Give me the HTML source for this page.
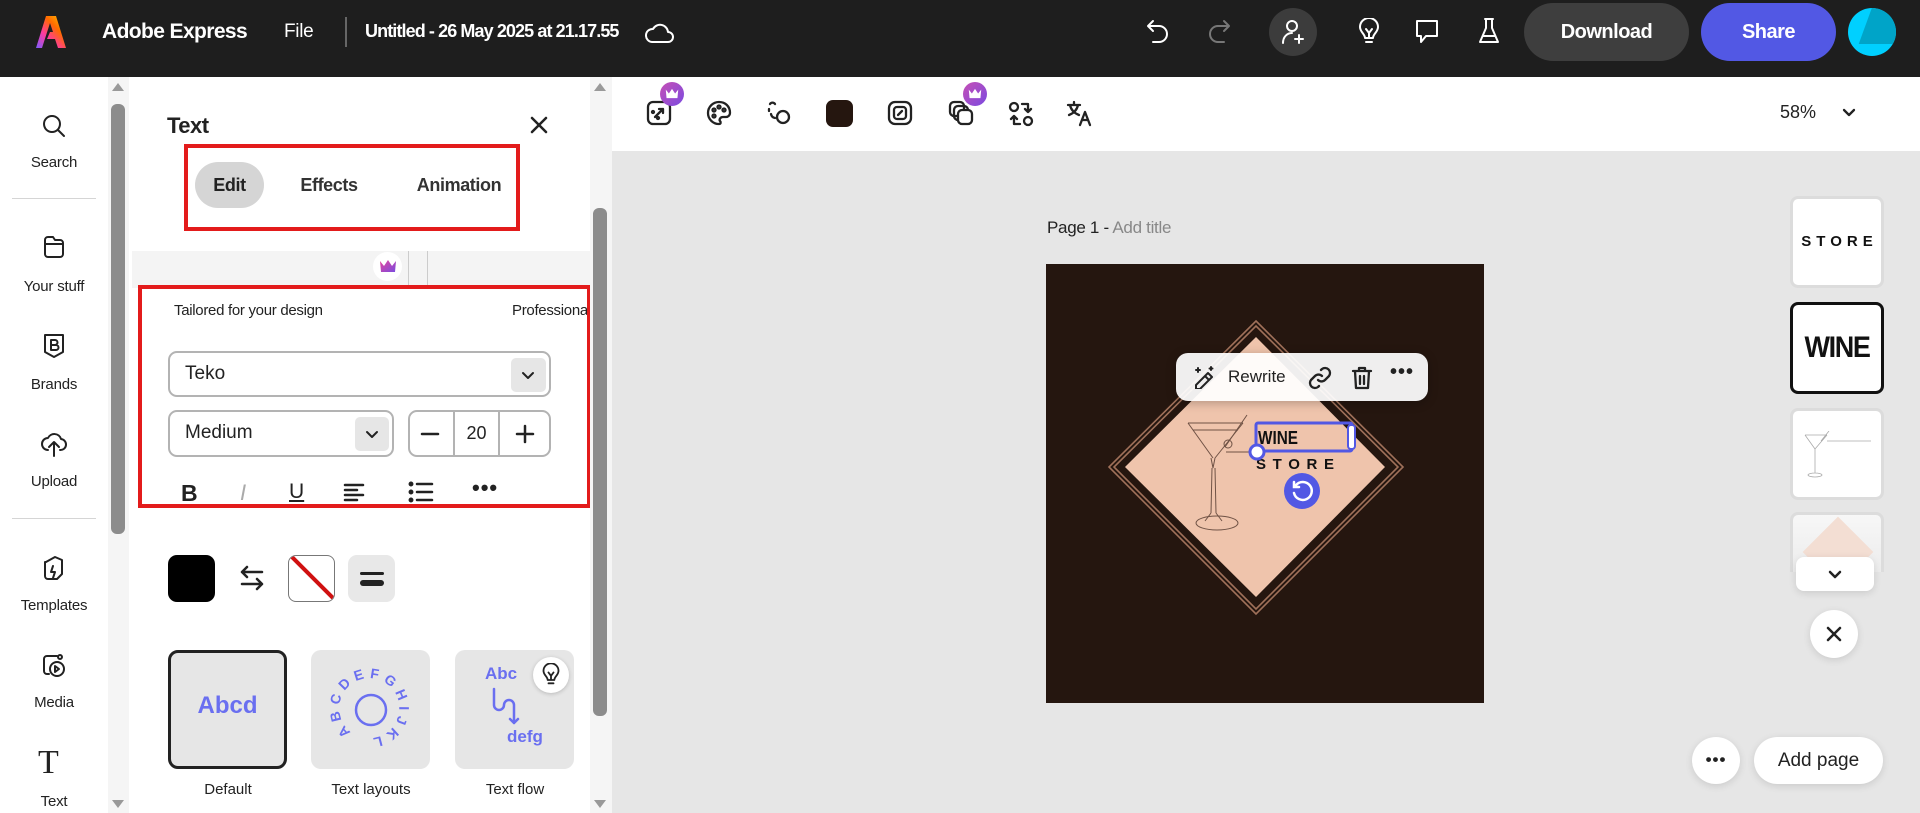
<!DOCTYPE html>
<html><head><meta charset="utf-8"><style>
*{box-sizing:border-box;margin:0;padding:0}
body{width:1920px;height:813px;overflow:hidden;font-family:"Liberation Sans",sans-serif;background:#e6e6e6;position:relative;color:#222}
.a{position:absolute}
.top{left:0;top:0;width:1920px;height:77px;background:#1e1e1e;color:#fff}
.ico{position:absolute;fill:none;stroke:currentColor;stroke-width:2;stroke-linecap:round;stroke-linejoin:round}
.rail{left:0;top:77px;width:108px;height:736px;background:#fff}
.rl{position:absolute;width:108px;text-align:center;font-size:15px;color:#222;letter-spacing:-.2px}
.hr{position:absolute;height:1px;background:#d5d5d5}
.sb{background:#f5f5f5}
.thumb{background:#8c8c8c;border-radius:6px;position:absolute}
.panel{left:129px;top:77px;width:461px;height:736px;background:#fff}
.red{position:absolute;border:4px solid #e31b1b}
.dd{position:absolute;border:2px solid #b3b3b3;border-radius:9px;background:#fff}
.chev{position:absolute;background:#e6e6e6;border-radius:5px}
.card{position:absolute;width:119px;height:119px;background:#e6e6e6;border-radius:10px}
.cl{position:absolute;font-size:15px;text-align:center;width:140px}
.tb{left:612px;top:77px;width:1308px;height:74px;background:#fff}
.crown{position:absolute;width:24px;height:24px;border-radius:50%;background:linear-gradient(135deg,#c64fb5,#7b4ae0)}
.tn{position:absolute;left:1790px;width:94px;height:92px;background:#fff;border-radius:8px;border:3px solid #dcdcdc;overflow:hidden}
</style></head><body>

<!-- TOP BAR -->
<div class="a top">
  <svg class="a" style="left:36px;top:14px" width="30" height="36" viewBox="0 0 30 36">
    <defs><linearGradient id="lg" x1="0" y1="1" x2="1" y2="0"><stop offset="0" stop-color="#7b5cff"/><stop offset=".35" stop-color="#ff3aa0"/><stop offset=".65" stop-color="#ff6a00"/><stop offset="1" stop-color="#ffcc00"/></linearGradient></defs>
    <path d="M10 2h10l10 32h-8l-3-9h-8l3-7h3l-3-9-8 25H0z" fill="url(#lg)"/>
  </svg>
  <div class="a" style="left:102px;top:20px;font-size:21px;font-weight:bold;letter-spacing:-.6px">Adobe Express</div>
  <div class="a" style="left:284px;top:21px;font-size:19px;letter-spacing:-.3px">File</div>
  <div class="a" style="left:345px;top:17px;width:2px;height:30px;background:#666"></div>
  <div class="a" style="left:365px;top:21px;font-size:18px;font-weight:bold;letter-spacing:-.9px">Untitled - 26 May 2025 at 21.17.55</div>
  <svg class="ico" style="left:645px;top:19px;color:#fff" width="30" height="26" viewBox="0 0 30 26"><path d="M7 23h16a5 5 0 0 0 0-10 8 8 0 0 0-15-3 6 6 0 0 0-1 13z"/></svg>
  <svg class="ico" style="left:1145px;top:18px;color:#fff" width="26" height="28" viewBox="0 0 26 28"><path d="M8 3L3 8l5 5M3 8h11a8 8 0 0 1 0 16H8"/></svg>
  <svg class="ico" style="left:1206px;top:18px;color:#777" width="26" height="28" viewBox="0 0 26 28"><path d="M18 3l5 5-5 5M23 8H12a8 8 0 0 0 0 16h6"/></svg>
  <div class="a" style="left:1269px;top:8px;width:48px;height:48px;border-radius:50%;background:#3c3c3c"></div>
  <svg class="ico" style="left:1281px;top:19px;color:#fff" width="26" height="26" viewBox="0 0 26 26"><circle cx="11" cy="7" r="5"/><path d="M2 24c0-6 4-10 9-10M18 16v8M14 20h8"/></svg>
  <svg class="ico" style="left:1357px;top:18px;color:#fff" width="24" height="28" viewBox="0 0 24 28"><path d="M8 20c0-4-5-6-5-11a9 9 0 0 1 18 0c0 5-5 7-5 11zM9 24h6M9 11l3 4 3-4M12 15v5"/></svg>
  <svg class="ico" style="left:1414px;top:18px;color:#fff" width="26" height="28" viewBox="0 0 26 28"><path d="M3 3h20v15H12l-5 6v-6H3z"/></svg>
  <svg class="ico" style="left:1477px;top:17px;color:#fff" width="24" height="30" viewBox="0 0 24 30"><path d="M8 2h8M9 2v9L3 25h18L15 11V2M6 19h12"/></svg>
  <div class="a" style="left:1524px;top:3px;width:165px;height:58px;border-radius:29px;background:#3e3e3e;font-size:20px;font-weight:bold;text-align:center;line-height:58px;letter-spacing:-.5px">Download</div>
  <div class="a" style="left:1701px;top:3px;width:135px;height:58px;border-radius:29px;background:#5258e4;font-size:20px;font-weight:bold;text-align:center;line-height:58px;letter-spacing:-.5px">Share</div>
  <div class="a" style="left:1848px;top:8px;width:48px;height:48px;border-radius:50%;background:#00d0ff;overflow:hidden"><div class="a" style="left:18px;top:-4px;width:40px;height:40px;background:#00a4c8;transform:skewX(-20deg)"></div></div>
</div>

<!-- LEFT RAIL -->
<div class="a rail">
  <svg class="ico" style="left:41px;top:36px" width="26" height="26" viewBox="0 0 26 26"><circle cx="11" cy="11" r="8"/><path d="M17 17l6 6"/></svg>
  <div class="rl" style="top:77px">Search</div>
  <div class="hr" style="left:12px;top:121px;width:84px"></div>
  <svg class="ico" style="left:42px;top:157px" width="24" height="26" viewBox="0 0 24 26"><path d="M3 6a3 3 0 0 1 3-3h5l2 3h5a3 3 0 0 1 3 3v11a3 3 0 0 1-3 3H6a3 3 0 0 1-3-3zM3 10h18"/></svg>
  <div class="rl" style="top:201px">Your stuff</div>
  <svg class="ico" style="left:42px;top:255px" width="24" height="28" viewBox="0 0 24 28"><path d="M3 3h18v17l-9 5-9-5z"/><path d="M9 8h4a2.5 2.5 0 0 1 0 5H9zM9 13h5a2.5 2.5 0 0 1 0 5H9z"/></svg>
  <div class="rl" style="top:299px">Brands</div>
  <svg class="ico" style="left:40px;top:353px" width="28" height="28" viewBox="0 0 28 28"><path d="M8 20a6 6 0 0 1 0-12 7 7 0 0 1 13 1 5 5 0 0 1-1 11M14 26V13M9 17l5-5 5 5"/></svg>
  <div class="rl" style="top:396px">Upload</div>
  <div class="hr" style="left:12px;top:441px;width:84px"></div>
  <svg class="ico" style="left:41px;top:477px" width="26" height="28" viewBox="0 0 26 28"><path d="M5 8l9-5 7 3v14l-5 5H7a3 3 0 0 1-3-3V8zM12 12l-2 6h4l-2 6"/></svg>
  <div class="rl" style="top:520px">Templates</div>
  <svg class="ico" style="left:41px;top:575px" width="26" height="28" viewBox="0 0 26 28"><path d="M8 22H6a3 3 0 0 1-3-3V7a3 3 0 0 1 3-3h10"/><circle cx="16" cy="17" r="7"/><path d="M14 14l4 3-4 3z"/><circle cx="19" cy="5" r="2"/></svg>
  <div class="rl" style="top:617px">Media</div>
  <div class="a" style="left:38px;top:667px;font-family:'Liberation Serif',serif;font-size:34px;color:#222">T</div>
  <div class="rl" style="top:716px">Text</div>
</div>
<div class="a sb" style="left:108px;top:77px;width:21px;height:736px"></div>
<div class="thumb" style="left:111px;top:104px;width:14px;height:430px"></div>
<div class="a" style="left:112px;top:83px;width:0;height:0;border-left:6px solid transparent;border-right:6px solid transparent;border-bottom:8px solid #999"></div>
<div class="a" style="left:112px;top:800px;width:0;height:0;border-left:6px solid transparent;border-right:6px solid transparent;border-top:8px solid #999"></div>

<!-- PANEL -->
<div class="a panel">
  <div class="a" style="left:38px;top:36px;font-size:22px;font-weight:bold;letter-spacing:-.5px">Text</div>
  <svg class="ico" style="left:400px;top:38px;stroke-width:2.5" width="20" height="20" viewBox="0 0 20 20"><path d="M3 3l14 14M17 3L3 17"/></svg>
  <div class="red" style="left:55px;top:67px;width:336px;height:87px"></div>
  <div class="a" style="left:66px;top:85px;width:69px;height:46px;border-radius:23px;background:#d5d5d5"></div>
  <div class="a" style="left:66px;top:98px;width:69px;text-align:center;font-size:18px;font-weight:bold;letter-spacing:-.4px">Edit</div>
  <div class="a" style="left:160px;top:98px;width:80px;text-align:center;font-size:18px;font-weight:bold;color:#333;letter-spacing:-.4px">Effects</div>
  <div class="a" style="left:280px;top:98px;width:100px;text-align:center;font-size:18px;font-weight:bold;color:#333;letter-spacing:-.4px">Animation</div>
  <div class="a" style="left:3px;top:174px;width:458px;height:37px;background:#f4f4f4"></div>
  <div class="a" style="left:279px;top:174px;width:1px;height:37px;background:#ccc"></div>
  <div class="a" style="left:298px;top:174px;width:1px;height:37px;background:#ccc"></div>
  <div class="a" style="left:244px;top:175px;width:29px;height:29px;border-radius:50%;background:#fff"></div>
  <svg class="a" style="left:250px;top:182px" width="18" height="14" viewBox="0 0 18 14"><defs><linearGradient id="cg" x1="0" y1="0" x2="1" y2="1"><stop offset="0" stop-color="#e8439a"/><stop offset="1" stop-color="#7a4ce0"/></linearGradient></defs><path d="M1 2l4 5 4-6 4 6 4-5-1 11H2z" fill="url(#cg)"/></svg>
  <div class="red" style="left:9px;top:208px;width:453px;height:223px"></div>
  <div class="a" style="left:45px;top:225px;font-size:15px;color:#222;letter-spacing:-.3px">Tailored for your design</div>
  <div class="a" style="left:383px;top:225px;font-size:15px;color:#222;letter-spacing:-.3px;width:75px;overflow:hidden;white-space:nowrap">Professional</div>
  <div class="dd" style="left:39px;top:274px;width:383px;height:46px"></div>
  <div class="a" style="left:56px;top:286px;font-size:19px">Teko</div>
  <div class="chev" style="left:382px;top:281px;width:35px;height:34px"></div>
  <svg class="ico" style="left:390px;top:289px" width="18" height="18" viewBox="0 0 18 18"><path d="M4 7l5 5 5-5"/></svg>
  <div class="dd" style="left:39px;top:333px;width:226px;height:47px"></div>
  <div class="a" style="left:56px;top:345px;font-size:19px">Medium</div>
  <div class="chev" style="left:226px;top:340px;width:34px;height:34px"></div>
  <svg class="ico" style="left:234px;top:348px" width="18" height="18" viewBox="0 0 18 18"><path d="M4 7l5 5 5-5"/></svg>
  <div class="dd" style="left:279px;top:333px;width:143px;height:47px"></div>
  <div class="a" style="left:324px;top:335px;width:2px;height:43px;background:#b3b3b3"></div>
  <div class="a" style="left:369px;top:335px;width:2px;height:43px;background:#b3b3b3"></div>
  <svg class="ico" style="left:291px;top:347px;stroke-width:2.5" width="20" height="20" viewBox="0 0 20 20"><path d="M2 10h16"/></svg>
  <div class="a" style="left:326px;top:346px;width:43px;text-align:center;font-size:18px">20</div>
  <svg class="ico" style="left:386px;top:347px;stroke-width:2.5" width="20" height="20" viewBox="0 0 20 20"><path d="M2 10h16M10 2v16"/></svg>
  <div class="a" style="left:52px;top:403px;font-size:23px;font-weight:bold">B</div>
  <div class="a" style="left:111px;top:403px;font-size:22px;font-style:italic;color:#aaa">I</div>
  <div class="a" style="left:160px;top:403px;font-size:21px;text-decoration:underline">U</div>
  <svg class="ico" style="left:214px;top:405px;stroke-width:2.5" width="22" height="20" viewBox="0 0 22 20"><path d="M2 3h18M2 8h12M2 13h18M2 18h12"/></svg>
  <svg class="ico" style="left:279px;top:404px;stroke-width:2.5" width="26" height="22" viewBox="0 0 26 22"><path d="M9 3h15M9 11h15M9 19h15"/><circle cx="3" cy="3" r="1.2"/><circle cx="3" cy="11" r="1.2"/><circle cx="3" cy="19" r="1.2"/></svg>
  <div class="a" style="left:343px;top:398px;font-size:22px;font-weight:bold;letter-spacing:1px">•••</div>
  <div class="a" style="left:39px;top:478px;width:47px;height:47px;border-radius:9px;background:#000"></div>
  <svg class="ico" style="left:109px;top:487px;stroke-width:2.5" width="28" height="28" viewBox="0 0 28 28"><path d="M24 8H4M9 3L4 8l5 5M4 20h20M19 15l5 5-5 5"/></svg>
  <div class="a" style="left:159px;top:478px;width:47px;height:47px;border-radius:8px;border:1.5px solid #777;background:#fff;overflow:hidden"><div class="a" style="left:-10px;top:21px;width:70px;height:4px;background:#d01010;transform:rotate(45deg)"></div></div>
  <div class="a" style="left:219px;top:478px;width:47px;height:47px;border-radius:9px;background:#e8e8e8"></div>
  <div class="a" style="left:231px;top:495px;width:24px;height:3px;background:#222;border-radius:2px"></div>
  <div class="a" style="left:231px;top:503px;width:24px;height:6px;background:#222;border-radius:3px"></div>
  <div class="card" style="left:39px;top:573px;border:3px solid #222"></div>
  <div class="a" style="left:39px;top:615px;width:119px;text-align:center;font-size:24px;font-weight:bold;color:#6a6ff0">Abcd</div>
  <div class="card" style="left:182px;top:573px"></div>
  <svg class="a" style="left:182px;top:573px" width="119" height="119" viewBox="0 0 119 119">
    <defs><path id="cp" d="M40 82A30 30 0 1 1 47 86" fill="none"/></defs>
    <circle cx="60" cy="60" r="15" fill="none" stroke="#6a6ff0" stroke-width="2.5"/>
    <text font-family="Liberation Sans" font-weight="bold" font-size="14" fill="#6a6ff0"><textPath href="#cp" textLength="165" lengthAdjust="spacing">ABCDEFGHIJKL</textPath></text>
  </svg>
  <div class="card" style="left:326px;top:573px"></div>
  <div class="a" style="left:356px;top:587px;font-size:17px;font-weight:bold;color:#6a6ff0">Abc</div>
  <svg class="ico" style="left:362px;top:610px;color:#6a6ff0;stroke-width:2.5" width="30" height="40" viewBox="0 0 30 40"><path d="M3 2v16a5 5 0 0 0 10 0 5 5 0 0 1 10 0v18M19 32l4 4 4-4"/></svg>
  <div class="a" style="left:378px;top:650px;font-size:17px;font-weight:bold;color:#6a6ff0">defg</div>
  <div class="a" style="left:404px;top:580px;width:36px;height:36px;border-radius:50%;background:#fff;box-shadow:0 1px 4px rgba(0,0,0,.2)"></div>
  <svg class="ico" style="left:412px;top:586px;stroke-width:2.2" width="20" height="24" viewBox="0 0 24 28"><path d="M8 20c0-4-5-6-5-11a9 9 0 0 1 18 0c0 5-5 7-5 11zM9 24h6M9 11l3 4 3-4M12 15v5"/></svg>
  <div class="cl" style="left:29px;top:704px">Default</div>
  <div class="cl" style="left:172px;top:704px">Text layouts</div>
  <div class="cl" style="left:316px;top:704px">Text flow</div>
</div>
<div class="a sb" style="left:590px;top:77px;width:22px;height:736px"></div>
<div class="thumb" style="left:593px;top:208px;width:14px;height:508px"></div>
<div class="a" style="left:594px;top:83px;width:0;height:0;border-left:6px solid transparent;border-right:6px solid transparent;border-bottom:8px solid #999"></div>
<div class="a" style="left:594px;top:800px;width:0;height:0;border-left:6px solid transparent;border-right:6px solid transparent;border-top:8px solid #999"></div>

<!-- TOOLBAR -->
<div class="a tb"></div>
<svg class="ico" style="left:646px;top:100px;stroke-width:2.3" width="26" height="26" viewBox="0 0 26 26"><rect x="2" y="2" width="22" height="22" rx="5"/><path d="M9 17l8-8M13 9h4v4"/><circle cx="7" cy="12" r="1"/><circle cx="12" cy="18" r="1"/></svg>
<div class="crown" style="left:660px;top:82px"></div>
<svg class="a" style="left:665px;top:88px" width="14" height="11" viewBox="0 0 18 14"><path d="M1 2l4 5 4-6 4 6 4-5-1 11H2z" fill="#fff"/></svg>
<svg class="ico" style="left:706px;top:100px;stroke-width:2.3" width="26" height="26" viewBox="0 0 26 26"><path d="M13 2a11 11 0 1 0 0 22c2 0 2-2 1-3s0-4 3-4h3a4 4 0 0 0 4-4C24 6 19 2 13 2z"/><circle cx="8" cy="10" r="1.5"/><circle cx="13" cy="7" r="1.5"/><circle cx="18" cy="10" r="1.5"/><circle cx="8" cy="16" r="1.5"/></svg>
<svg class="ico" style="left:766px;top:100px;stroke-width:2.3" width="26" height="26" viewBox="0 0 26 26"><circle cx="17" cy="17" r="6"/><path d="M4 4a3 3 0 0 1 5 0M3 9v2M5 14a5 5 0 0 0 4 4"/></svg>
<div class="a" style="left:826px;top:100px;width:27px;height:27px;border-radius:7px;background:#25160f"></div>
<svg class="ico" style="left:887px;top:100px;stroke-width:2.3" width="26" height="26" viewBox="0 0 26 26"><rect x="2" y="2" width="22" height="22" rx="6"/><rect x="7" y="7" width="12" height="12" rx="3"/><path d="M11 15l4-4"/></svg>
<svg class="ico" style="left:948px;top:100px;stroke-width:2.3" width="26" height="26" viewBox="0 0 26 26"><rect x="2" y="2" width="14" height="14" rx="4"/><rect x="6" y="6" width="14" height="14" rx="4"/><rect x="10" y="10" width="14" height="14" rx="4" fill="#fff"/></svg>
<div class="crown" style="left:963px;top:82px"></div>
<svg class="a" style="left:968px;top:88px" width="14" height="11" viewBox="0 0 18 14"><path d="M1 2l4 5 4-6 4 6 4-5-1 11H2z" fill="#fff"/></svg>
<svg class="ico" style="left:1007px;top:100px;stroke-width:2.3" width="28" height="28" viewBox="0 0 28 28"><circle cx="7" cy="7" r="4"/><circle cx="21" cy="21" r="4"/><path d="M15 4h6v8M18 9l3 3 3-3M13 24H7v-8M4 19l3-3 3 3"/></svg>
<svg class="ico" style="left:1066px;top:100px;stroke-width:2.3" width="28" height="28" viewBox="0 0 28 28"><path d="M2 5h12M8 2v3M4 5c1 5 4 8 9 10M12 5c-1 5-4 8-9 10M14 25l5-13 5 13M16 20h6"/></svg>
<div class="a" style="left:1780px;top:102px;font-size:18px">58%</div>
<svg class="ico" style="left:1840px;top:103px;stroke-width:2.3" width="18" height="18" viewBox="0 0 18 18"><path d="M4 7l5 5 5-5"/></svg>

<div class="a" style="left:1047px;top:218px;font-size:17px;letter-spacing:-.3px"><span style="color:#222">Page 1 -</span> <span style="color:#888">Add title</span></div>

<!-- CANVAS -->
<svg class="a" style="left:1046px;top:264px" width="438" height="439" viewBox="0 0 438 439">
  <rect width="438" height="439" fill="#25160f"/>
  <polygon points="210,57 357,203 210,350 63,203" fill="none" stroke="#a0715a" stroke-width="1.6"/>
  <polygon points="210,62 352,203 210,345 68,203" fill="none" stroke="#a0715a" stroke-width="1.6"/>
  <polygon points="210,73 339,203 210,333 79,203" fill="#efc4ac"/>
  <g fill="none" stroke="#6f5245" stroke-width="1">
    <path d="M142 159h55M142 159l25 35M197 159l-28 35M147 166h45"/>
    <path d="M201 151l-22 32M180 188h31"/>
    <circle cx="182" cy="180" r="4"/>
    <path d="M165 194l2 10 2-10M166 204l-1 45M169 204l1 45M165 249l-6 8M170 249l6 8"/>
    <ellipse cx="171" cy="259" rx="21" ry="7"/>
  </g>
  <text x="212" y="180" font-family="Liberation Sans" font-weight="bold" font-size="18" fill="#111" textLength="40" lengthAdjust="spacingAndGlyphs">WINE</text>
  <text x="210" y="205" font-family="Liberation Sans" font-weight="bold" font-size="15" fill="#111" textLength="78" lengthAdjust="spacing">STORE</text>
  <rect x="210" y="159" width="96" height="28" fill="none" stroke="#5258e4" stroke-width="3" rx="2"/>
  <rect x="302" y="161" width="7" height="24" rx="3" fill="#fff" stroke="#5258e4" stroke-width="2"/>
  <circle cx="211" cy="188" r="7" fill="#fff" stroke="#5258e4" stroke-width="3"/>
  <circle cx="256" cy="227" r="18" fill="#5258e4"/>
  <path d="M250 221a9 9 0 1 1-2 8M248 218v5h5" fill="none" stroke="#fff" stroke-width="2.5" stroke-linecap="round"/>
</svg>
<div class="a" style="left:1176px;top:353px;width:252px;height:48px;border-radius:12px;background:rgba(255,255,255,.93);box-shadow:0 2px 10px rgba(0,0,0,.25)"></div>
<svg class="ico" style="left:1192px;top:365px;stroke-width:2" width="24" height="24" viewBox="0 0 24 24"><path d="M4 20l12-12 4 4-12 12H4zM13 11l4 4M6 3v4M4 5h4M19 2v3M17.5 3.5h3"/></svg>
<div class="a" style="left:1228px;top:367px;font-size:17px;color:#222">Rewrite</div>
<svg class="ico" style="left:1308px;top:366px;stroke-width:2.3" width="24" height="24" viewBox="0 0 24 24"><path d="M10 14a5 5 0 0 0 7 0l4-4a5 5 0 0 0-7-7l-1 1M14 10a5 5 0 0 0-7 0l-4 4a5 5 0 0 0 7 7l1-1"/></svg>
<svg class="ico" style="left:1350px;top:365px;stroke-width:2.3" width="24" height="26" viewBox="0 0 24 26"><path d="M3 6h18M9 6V3h6v3M5 6l1 17h12l1-17M10 11v8M14 11v8"/></svg>
<div class="a" style="left:1390px;top:361px;font-size:20px;font-weight:bold;letter-spacing:1px">•••</div>

<!-- THUMBNAILS -->
<div class="tn" style="top:196px"><div style="text-align:center;margin-top:34px;font-weight:bold;font-size:15px;letter-spacing:5px;padding-left:5px;color:#111">STORE</div></div>
<div class="tn" style="top:302px;border-color:#111"><div style="text-align:center;margin-top:26px;font-weight:bold;font-size:30px;color:#111;letter-spacing:-1.5px;transform:scaleX(.9)">WINE</div></div>
<div class="tn" style="top:408px">
  <svg class="a" style="left:10px;top:20px" width="75" height="50" viewBox="0 0 75 50"><g fill="none" stroke="#aaa" stroke-width=".8"><path d="M2 4h22M2 4l10 14M24 4l-12 14M12 18v24M5 44a7 2 0 0 0 14 0a7 2 0 0 0-14 0M24 10h44M26 0l-8 10"/></g></svg>
</div>
<div class="tn" style="top:512px;height:60px;border-bottom:none;border-radius:8px 8px 0 0;background:linear-gradient(#f7f7f7,#ececec)">
  <div class="a" style="left:20px;top:12px;width:50px;height:50px;background:#f3ded3;transform:rotate(45deg)"></div>
</div>
<div class="a" style="left:1796px;top:557px;width:78px;height:34px;border-radius:8px;background:#fff;box-shadow:0 2px 8px rgba(0,0,0,.12)"></div>
<svg class="ico" style="left:1826px;top:566px;stroke-width:2.5" width="18" height="16" viewBox="0 0 18 16"><path d="M4 6l5 5 5-5"/></svg>
<div class="a" style="left:1810px;top:610px;width:48px;height:48px;border-radius:50%;background:#fff;box-shadow:0 2px 8px rgba(0,0,0,.12)"></div>
<svg class="ico" style="left:1825px;top:625px;stroke-width:2.5" width="18" height="18" viewBox="0 0 18 18"><path d="M3 3l12 12M15 3L3 15"/></svg>
<div class="a" style="left:1692px;top:737px;width:48px;height:47px;border-radius:50%;background:#fff;box-shadow:0 2px 8px rgba(0,0,0,.12);text-align:center;font-size:17px;font-weight:bold;line-height:45px;letter-spacing:1px">•••</div>
<div class="a" style="left:1754px;top:737px;width:129px;height:47px;border-radius:24px;background:#fff;box-shadow:0 2px 8px rgba(0,0,0,.12);text-align:center;font-size:19px;line-height:47px;color:#222">Add page</div>
</body></html>
